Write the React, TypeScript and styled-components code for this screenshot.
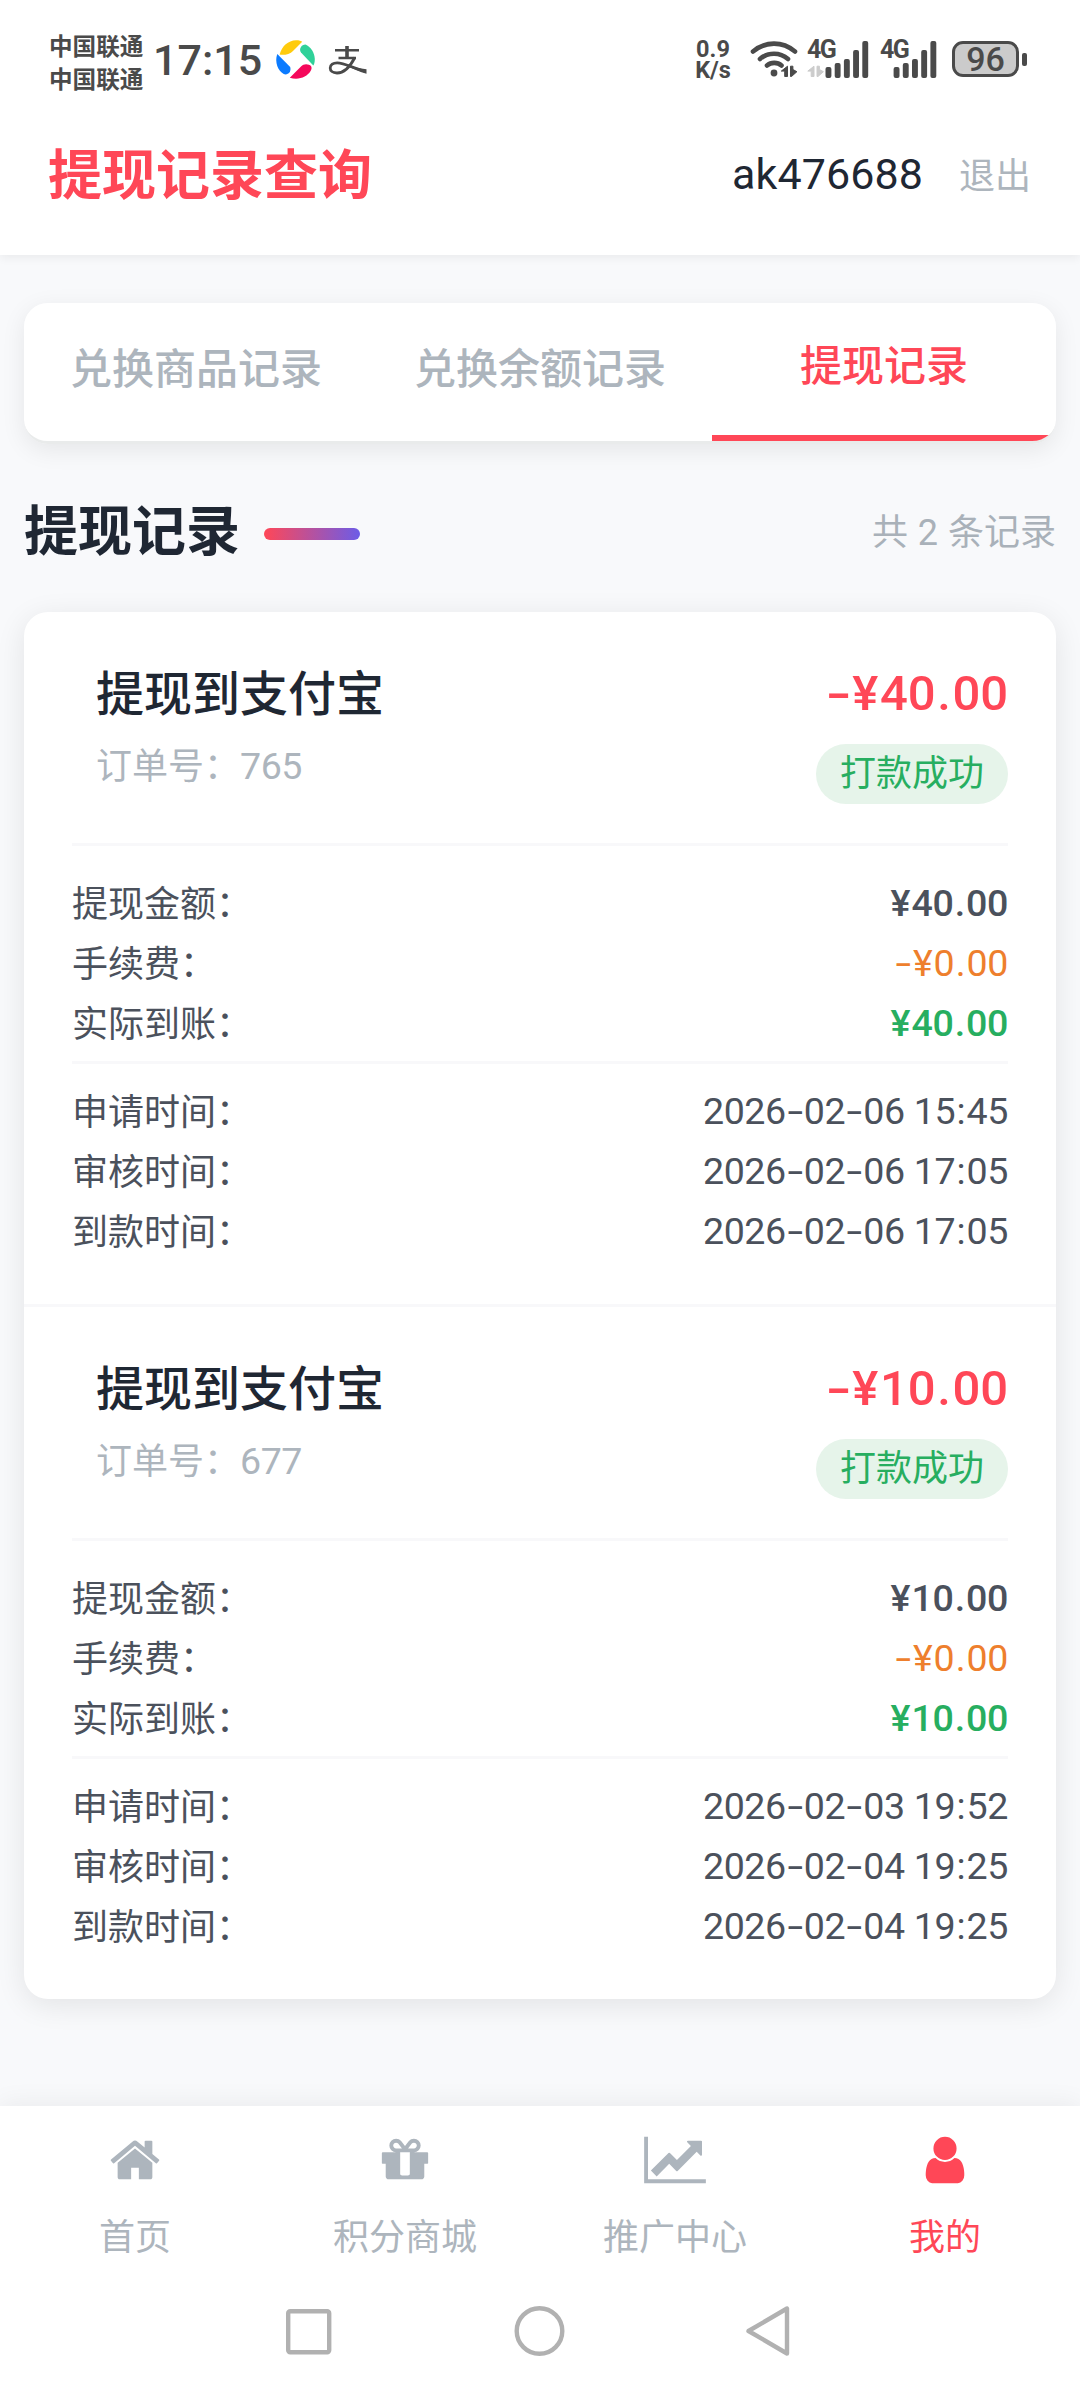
import React from "react";
import styled, { createGlobalStyle } from "styled-components";

const cjk = `"Noto Sans CJK SC", sans-serif`;
const latin = `Roboto, "Noto Sans CJK SC", sans-serif`;

const c = {
  red: "#ff4757",
  ink: "#1f2733",
  body: "#4b515c",
  muted: "#adb5bd",
  green: "#27ae60",
  orange: "#ee7f2d",
  status: "#4a4a4a",
  line: "#f8f8fa",
};

const GlobalStyle = createGlobalStyle`
  * { box-sizing: border-box; }
  body { margin: 0; background: #f8f9fb; font-family: ${cjk}; }
`;

const Screen = styled.div`
  display: flex;
  flex-direction: column;
  width: 1080px;
  height: 2388px;
  overflow: hidden;
  background: #f8f9fb;
`;

/* ---------- status bar ---------- */
const Top = styled.header`
  flex: none;
  height: 255px;
  background: #fff;
  box-shadow: 0 3px 9px rgba(0, 0, 0, 0.06);
`;

const StatusBar = styled.div`
  display: flex;
  justify-content: space-between;
  height: 96px;
  padding: 30px 53px 0 49px;
  color: ${c.status};
`;

const StatusSide = styled.div`
  display: flex;
  align-items: flex-start;
`;

const Carriers = styled.div`
  display: flex;
  flex-direction: column;
  width: 96px;
  margin-top: -1px;
  font: 700 23.6px/33px ${cjk};
  white-space: nowrap;
`;

const Clock = styled.div`
  width: 121px;
  margin-left: 8px;
  padding-top: 5px;
  font: 500 43px/50px ${latin};
`;

const StatusIcon = styled.svg<{ $ml: number }>`
  display: block;
  flex: none;
  margin: 10px 0 0 ${(p) => p.$ml}px;
  overflow: visible;
`;

const Speed = styled.div`
  display: flex;
  flex-direction: column;
  width: 42px;
  margin-right: 16px;
  padding-top: 9px;
  font: 700 23.5px/21px ${latin};
  text-align: center;
`;

const Signal = styled.div<{ $width: number; $ml: number }>`
  display: grid;
  width: ${(p) => p.$width}px;
  margin: 10px 0 0 ${(p) => p.$ml}px;
`;

const SignalTag = styled.span`
  grid-area: 1 / 1;
  font: 700 25px/20px ${latin};
  letter-spacing: -1.6px;
`;

const SignalArt = styled.svg`
  grid-area: 1 / 1;
  display: block;
`;

const Battery = styled.div`
  display: flex;
  align-items: center;
  margin: 11px 0 0 15px;
`;

const BatteryBody = styled.div`
  width: 67px;
  height: 36px;
  border: 3.5px solid ${c.status};
  border-radius: 11px;
  background: #cbcbcb;
  font: 500 34px/31px ${latin};
  text-align: center;
`;

const BatteryNub = styled.div`
  width: 5px;
  height: 13px;
  margin-left: 3px;
  border-radius: 2px;
  background: ${c.status};
`;

/* ---------- title bar ---------- */
const TitleBar = styled.div`
  display: flex;
  align-items: center;
  height: 156px;
  padding: 0 49px 0 48px;
`;

const PageTitle = styled.h1`
  flex: 1;
  margin: -5px 0 0;
  color: ${c.red};
  font: 700 54px/80px ${cjk};
`;

const UserName = styled.span`
  color: ${c.ink};
  font: 400 43px/60px ${latin};
  letter-spacing: 0.1px;
`;

const Logout = styled.span`
  margin: -2px 0 0 36px;
  color: ${c.muted};
  font: 400 36px/54px ${cjk};
`;

/* ---------- content ---------- */
const Content = styled.main`
  flex: 1;
  display: flex;
  flex-direction: column;
  padding: 48px 24px 0;
`;

const Tabs = styled.nav`
  display: flex;
  height: 141px;
  border-radius: 24px;
  border-bottom: 3px solid #e9ebeb;
  background: #fff;
  overflow: hidden;
`;

const TabsShadow = styled.div`
  border-radius: 24px;
  box-shadow: 0 6px 24px rgba(0, 0, 0, 0.08);
`;

const Tab = styled.div<{ $active?: boolean }>`
  flex: 1;
  padding-top: ${(p) => (p.$active ? 29 : 32)}px;
  border-bottom: ${(p) => (p.$active ? `6px solid ${c.red}` : "none")};
  color: ${(p) => (p.$active ? c.red : c.muted)};
  font: 500 42px/62px ${cjk};
  text-align: center;
`;

const SectionHead = styled.div`
  display: flex;
  align-items: center;
  height: 168px;
  padding-top: 5px;
`;

const SectionTitle = styled.h2`
  margin: -5px 0 0;
  color: ${c.ink};
  font: 700 54px/80px ${cjk};
`;

const Accent = styled.div`
  width: 96px;
  height: 12px;
  margin: 6px 0 0 24px;
  border-radius: 6px;
  background: linear-gradient(90deg, ${c.red}, #6c5ce7);
`;

const Count = styled.span`
  margin: 5px 0 0 auto;
  color: #a9b1b9;
  font: 400 36px/54px ${latin};
  word-spacing: 1px;
`;

const CardList = styled.div`
  border-radius: 24px;
  background: #fff;
  box-shadow: 0 6px 30px rgba(0, 0, 0, 0.09);
`;

const Card = styled.article`
  padding: 48px 48px 43px;
  & + & {
    border-top: 3px solid ${c.line};
  }
`;

const CardHead = styled.div`
  display: flex;
  justify-content: space-between;
  height: 186px;
  border-bottom: 3px solid ${c.line};
`;

const CardName = styled.div`
  display: flex;
  flex-direction: column;
  padding-left: 24px;
`;

const Method = styled.span`
  margin-top: -5px;
  color: ${c.ink};
  font: 500 48px/70px ${cjk};
`;

const OrderNo = styled.span`
  margin-top: 11px;
  color: ${c.muted};
  font: 400 36px/54px ${cjk};
`;

const CardSum = styled.div`
  display: flex;
  flex-direction: column;
  align-items: flex-end;
`;

const Total = styled.span`
  height: 72px;
  margin-bottom: 12px;
  padding-top: 4px;
  color: ${c.red};
  font: 500 49px/60px ${latin};
  letter-spacing: -0.1px;
`;

const Badge = styled.span`
  height: 60px;
  padding: 0 24px;
  border-radius: 30px;
  background: #e6f4ea;
  color: ${c.green};
  font: 400 36px/53px ${cjk};
`;

const Rows = styled.dl<{ $first?: boolean }>`
  margin: 0;
  padding: ${(p) => (p.$first ? "27px 0 8px" : "17px 0 0")};
  border-bottom: ${(p) => (p.$first ? `3px solid ${c.line}` : "none")};
`;

const Row = styled.div`
  display: flex;
  justify-content: space-between;
  align-items: flex-start;
  height: 60px;
`;

const Label = styled.dt`
  color: ${c.body};
  font: 400 36px/56px ${cjk};
`;

const Value = styled.dd<{ $tone?: string; $bold?: boolean }>`
  margin: 0;
  color: ${(p) => p.$tone ?? c.body};
  font: ${(p) => (p.$bold ? 500 : 400)} 37.6px/60px ${latin};
  letter-spacing: -0.4px;
`;

const Digits = styled.span`
  font-family: Roboto, sans-serif;
  font-size: 37.6px;
  letter-spacing: -0.5px;
`;

const Dash = styled.span`
  display: inline-block;
  width: 0.48em;
  text-align: center;
  transform: scaleX(1.5);
`;

const Spaced = styled.span`
  padding: 0 0.036em;
`;

/* ---------- bottom navigation ---------- */
const BottomNav = styled.nav`
  flex: none;
  display: flex;
  height: 176px;
  background: #fff;
  box-shadow: 0 -3px 24px rgba(0, 0, 0, 0.06);
`;

const NavItem = styled.div<{ $active?: boolean }>`
  flex: 1;
  display: flex;
  flex-direction: column;
  align-items: center;
  padding-top: 27px;
  color: ${(p) => (p.$active ? c.red : c.muted)};
  font: 400 36px/54px ${cjk};
`;

const NavIcon = styled.svg`
  width: 54px;
  height: 54px;
  margin-bottom: 20px;
  overflow: visible;
`;

const SystemNav = styled.div`
  flex: none;
  display: flex;
  justify-content: center;
  align-items: flex-start;
  gap: 182px;
  height: 106px;
  padding: 24px 2px 0 0;
  background: #fff;
`;

const SysIcon = styled.svg`
  width: 50px;
  height: 50px;
  overflow: visible;
  fill: none;
  stroke: #b1b1b1;
  stroke-width: 4.4;
  stroke-linejoin: round;
`;

const Numeric = ({ text }: { text: string }) => (
  <>
    {text.split(/([-:.¥])/).map((part, i) => {
      if (part === "-") return <Dash key={i}>-</Dash>;
      if (/^[:.¥]$/.test(part)) return <Spaced key={i}>{part}</Spaced>;
      return part;
    })}
  </>
);

const Transfer = ({ color }: { color: string }) => (
  <path
    fill={color}
    stroke={color}
    strokeWidth="1"
    strokeLinejoin="round"
    d="M7 .7V11H4.2V5.6H.8ZM10 .7h2.4V4L16.4 6.2 11 11H10Z"
  />
);

type CellSignalProps = { width: number; ml: number; barsAt: number; idle?: boolean };

const CellSignal = ({ width, ml, barsAt, idle }: CellSignalProps) => (
  <Signal $width={width} $ml={ml}>
    <SignalTag>4G</SignalTag>
    <SignalArt width={width} height="38">
      {idle && (
        <g transform="translate(0 25.5)">
          <Transfer color="#cccccc" />
        </g>
      )}
      {[11, 15, 19, 28, 37].map((h, i) => (
        <rect key={h} x={barsAt + i * 9.2} y={38 - h} width="5.9" height={h} rx="2" fill={c.status} />
      ))}
    </SignalArt>
  </Signal>
);

/* full-width colon that closes every field name */
const COLON = "\uFF1A";

const records = [
  {
    order: "765",
    amount: "¥40.00",
    times: ["2026-02-06 15:45", "2026-02-06 17:05", "2026-02-06 17:05"],
  },
  {
    order: "677",
    amount: "¥10.00",
    times: ["2026-02-03 19:52", "2026-02-04 19:25", "2026-02-04 19:25"],
  },
];

const timeLabels = ["申请时间", "审核时间", "到款时间"];

const nav = [
  {
    label: "首页",
    path: "M1472 992v480q0 26-19 45t-45 19h-384v-384h-256v384h-384q-26 0-45-19t-19-45v-480q0-1 .5-3t.5-3l575-474 575 474q1 2 1 6zm223-69l-62 74q-8 9-21 11h-3q-13 0-21-7l-692-577-692 577q-12 8-24 7-13-2-21-11l-62-74q-8-10-7-23.5t11-21.5l719-599q32-26 76-26t76 26l244 204v-195q0-14 9-23t23-9h192q14 0 23 9t9 23v408l219 182q10 8 11 21.5t-7 23.5z",
  },
  {
    label: "积分商城",
    path: "M1056 1356v-716h-320v716q0 25 18 38.5t46 13.5h192q28 0 46-13.5t18-38.5zm-456-844h195l-126-161q-26-31-69-31-40 0-68 28t-28 68 28 68 68 28zm688-96q0-40-28-68t-68-28q-43 0-69 31l-125 161h194q40 0 68-28t28-68zm376 256v320q0 14-9 23t-23 9h-96v416q0 40-28 68t-68 28h-1088q-40 0-68-28t-28-68v-416h-96q-14 0-23-9t-9-23v-320q0-14 9-23t23-9h440q-93 0-158.5-65.5t-65.5-158.5 65.5-158.5 158.5-65.5q107 0 168 77l128 165 128-165q61-77 168-77 93 0 158.5 65.5t65.5 158.5-65.5 158.5-158.5 65.5h440q14 0 23 9t9 23z",
  },
  {
    label: "推广中心",
    path: "M1920 1536v128h-2048v-1536h128v1408h1920zm-128-1248v435q0 21-19.5 29.5t-35.5-7.5l-121-121-633 633q-10 10-23 10t-23-10l-233-233-416 416-192-192 585-585q10-10 23-10t23 10l233 233 464-464-121-121q-16-16-7.5-35.5t29.5-19.5h435q14 0 23 9t9 23z",
  },
  {
    label: "我的",
    active: true,
    path: "M1536 1399q0 109-62.5 187t-150.5 78h-854q-88 0-150.5-78t-62.5-187q0-85 8.5-160.5t31.5-152 58.5-131 94-89 134.5-34.5q131 128 313 128t313-128q76 0 134.5 34.5t94 89 58.5 131 31.5 152 8.5 160.5zm-256-887q0 159-112.5 271.5t-271.5 112.5-271.5-112.5-112.5-271.5 112.5-271.5 271.5-112.5 271.5 112.5 112.5 271.5z",
  },
];

export default function App() {
  return (
    <Screen>
      <GlobalStyle />
      <Top>
        <StatusBar>
          <StatusSide>
            <Carriers>
              <span>中国联通</span>
              <span>中国联通</span>
            </Carriers>
            <Clock>17:15</Clock>
            <StatusIcon $ml={2} width="39" height="39" viewBox="0 0 39 39">
              <path fill="#ffcb0d" d="M3.6 14.5C6 6 12 .6 20 .3c3 0 5.5.6 6.2 1.5L17 11c-3 3.5-10 4.5-13.4 3.5Z" />
              <path fill="#30d199" d="M25 12.5c-2.5-3.5.5-8 4.5-8 5 2 9 8 9.3 14.5 0 3-.6 5.5-1.5 6.4Z" />
              <path fill="#f5085b" d="M13.8 37.7 25 26.5c3-3.5 8-2.5 10-.5 1 1.5.6 3.5-.4 5-3.6 6-12 9.5-20.8 6.7Z" />
              <path fill="#0b7bff" d="M1.3 14c-3 8 .7 17 6.4 20 3.5 1.5 8-1.5 6.5-7Z" />
            </StatusIcon>
            <StatusIcon $ml={14} width="38" height="39" viewBox="0 0 38 39" fill="none" stroke={c.status}>
              <path strokeWidth="2.6" d="M6 10.3h24M9.5 18H27" />
              <path strokeWidth="3.6" d="M18 6v12" />
              <path strokeWidth="2.8" d="M25.8 17.5C22 25 16 33 8 33c-4.500 0-6.800-2.300-6.800-5 0-3.300 3-5.200 7-5.200 8 0 15 5.200 28 8.500" />
              <path fill={c.status} stroke="none" d="M19 25c6 2.500 11 3.500 18.500 4.200v4.600C31 32 24 29 18 26Z" />
            </StatusIcon>
          </StatusSide>
          <StatusSide>
            <Speed>
              <span>0.9</span>
              <span>K/s</span>
            </Speed>
            <StatusIcon
              $ml={0}
              width="48"
              height="38"
              viewBox="0 0 48 38"
              fill="none"
              stroke={c.status}
              strokeWidth="4.6"
              strokeLinecap="round"
            >
              <path d="M3 11.5c12.5-10.5 29.5-10.5 42 0M10 19c8-7 20-7 28 0M17 25.5c4-3.500 10.500-3.500 14.500 0" />
              <circle cx="24" cy="33" r="3.4" fill={c.status} stroke="none" />
              <g transform="translate(30.5 25.5)" strokeLinecap="butt">
                <Transfer color={c.status} />
              </g>
            </StatusIcon>
            <CellSignal width={62} ml={9} barsAt={18.5} idle />
            <CellSignal width={57} ml={11} barsAt={13.6} />
            <Battery>
              <BatteryBody>96</BatteryBody>
              <BatteryNub />
            </Battery>
          </StatusSide>
        </StatusBar>
        <TitleBar>
          <PageTitle>提现记录查询</PageTitle>
          <UserName>ak476688</UserName>
          <Logout>退出</Logout>
        </TitleBar>
      </Top>

      <Content>
        <TabsShadow>
          <Tabs>
            <Tab>兑换商品记录</Tab>
            <Tab>兑换余额记录</Tab>
            <Tab $active>提现记录</Tab>
          </Tabs>
        </TabsShadow>
        <SectionHead>
          <SectionTitle>提现记录</SectionTitle>
          <Accent />
          <Count>共 2 条记录</Count>
        </SectionHead>
        <CardList>
          {records.map((r) => (
            <Card key={r.order}>
              <CardHead>
                <CardName>
                  <Method>提现到支付宝</Method>
                  <OrderNo>
                    {"订单号" + COLON}
                    <Digits>{r.order}</Digits>
                  </OrderNo>
                </CardName>
                <CardSum>
                  <Total>
                    <Numeric text={"-" + r.amount} />
                  </Total>
                  <Badge>打款成功</Badge>
                </CardSum>
              </CardHead>
              <Rows $first>
                <Row>
                  <Label>{"提现金额" + COLON}</Label>
                  <Value $bold>
                    <Numeric text={r.amount} />
                  </Value>
                </Row>
                <Row>
                  <Label>{"手续费" + COLON}</Label>
                  <Value $tone={c.orange}>
                    <Numeric text="-¥0.00" />
                  </Value>
                </Row>
                <Row>
                  <Label>{"实际到账" + COLON}</Label>
                  <Value $tone={c.green} $bold>
                    <Numeric text={r.amount} />
                  </Value>
                </Row>
              </Rows>
              <Rows>
                {r.times.map((t, i) => (
                  <Row key={timeLabels[i]}>
                    <Label>{timeLabels[i] + COLON}</Label>
                    <Value>
                      <Numeric text={t} />
                    </Value>
                  </Row>
                ))}
              </Rows>
            </Card>
          ))}
        </CardList>
      </Content>

      <BottomNav>
        {nav.map((n) => (
          <NavItem key={n.label} $active={n.active}>
            <NavIcon viewBox="0 0 1792 1792" fill="currentColor">
              <path d={n.path} />
            </NavIcon>
            <span>{n.label}</span>
          </NavItem>
        ))}
      </BottomNav>
      <SystemNav>
        <SysIcon viewBox="0 0 50 50">
          <rect x="6.2" y="5.2" width="41" height="41" rx="2" />
        </SysIcon>
        <SysIcon viewBox="0 0 50 50">
          <circle cx="25.5" cy="25" r="22.8" />
        </SysIcon>
        <SysIcon viewBox="0 0 50 50">
          <path d="M41 2.5v45L2.5 25Z" />
        </SysIcon>
      </SystemNav>
    </Screen>
  );
}
